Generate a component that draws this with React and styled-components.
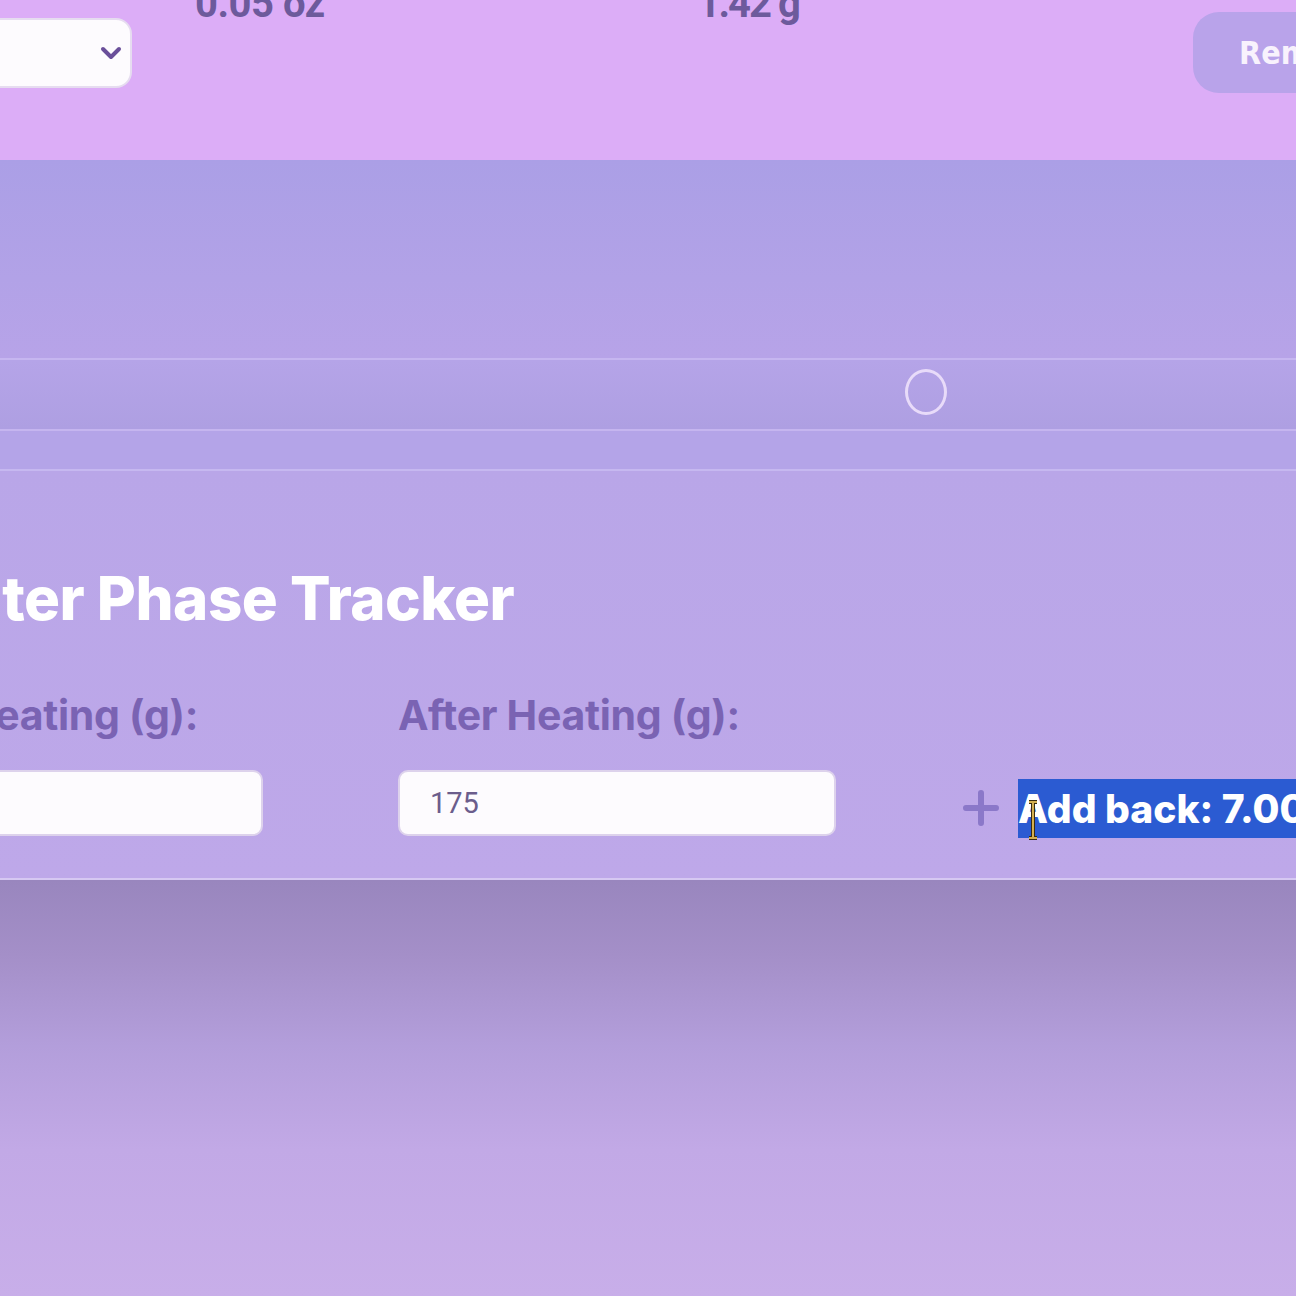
import React from 'react';
import styled, { createGlobalStyle } from 'styled-components';

const GlobalStyle = createGlobalStyle`
  html, body {
    margin: 0;
    padding: 0;
    background: #c6abe8;
    overflow: hidden;
  }
`;

const Page = styled.div`
  width: 1296px;
  height: 1296px;
  overflow: hidden;
  display: flex;
  flex-direction: column;
  font-family: Inter, 'Open Sans', sans-serif;
`;

const IngredientRow = styled.div`
  height: 160px;
  flex-shrink: 0;
  background: #dcadf7;
  display: flex;
  align-items: flex-start;
  box-sizing: border-box;
`;

const UnitSelect = styled.div`
  margin-top: 18px;
  margin-left: -40px;
  width: 172px;
  height: 70px;
  box-sizing: border-box;
  background: #fdfbfe;
  border: 2px solid #e6dcf0;
  border-radius: 16px;
  display: flex;
  align-items: center;
  justify-content: flex-end;
  padding-right: 8px;
  color: #6a4f9a;
`;

const Amount = styled.div`
  font-family: Roboto, 'Liberation Sans', sans-serif;
  font-weight: 700;
  font-size: 40px;
  line-height: 40px;
  margin-top: -16px;
  margin-left: ${(p) => p.$gap}px;
  color: #6d5a9c;
  letter-spacing: ${(p) => p.$tight}px;
  white-space: nowrap;
`;

const RemoveButton = styled.button`
  margin-top: 12px;
  margin-left: auto;
  margin-right: -60px;
  width: 163px;
  height: 81px;
  border: none;
  border-radius: 26px;
  background: #b9a3ea;
  color: #f8f2fd;
  font-family: 'DejaVu Sans Condensed', 'Liberation Sans Narrow', sans-serif;
  font-weight: 700;
  font-size: 32px;
  text-align: left;
  padding-left: 46px;
  white-space: nowrap;
`;

const Backdrop = styled.div`
  height: 198px;
  flex-shrink: 0;
  background: linear-gradient(180deg, #ab9fe6 0%, #b2a2e7 60%, #b7a3e8 100%);
`;

const SliderBand = styled.div`
  height: 73px;
  flex-shrink: 0;
  box-sizing: border-box;
  border-top: 2px solid #c6b6f0;
  border-bottom: 2px solid #c5b5ef;
  background: linear-gradient(180deg, #b5a4e8 0%, #ae9fe2 100%);
  display: flex;
  align-items: center;
  padding-left: 905px;
`;

const Knob = styled.span`
  width: 42px;
  height: 46px;
  box-sizing: border-box;
  border: 3px solid #e8dbf9;
  border-radius: 50%;
  margin-top: -6px;
`;

const Spacer = styled.div`
  height: 40px;
  flex-shrink: 0;
  box-sizing: border-box;
  border-bottom: 2px solid #c6b8f0;
  background: #b4a4e8;
`;

const TrackerCard = styled.section`
  height: 409px;
  flex-shrink: 0;
  box-sizing: border-box;
  background: linear-gradient(180deg, #b9a6e8 0%, #bea8e9 100%);
  border-bottom: 2px solid #d6c8f2;
  padding-top: 92px;
  margin-left: -175px;
`;

const Title = styled.h2`
  margin: 0;
  padding-left: 83px;
  font-family: Inter, 'Open Sans', sans-serif;
  font-weight: 800;
  font-size: 60px;
  line-height: 70px;
  color: #ffffff;
  letter-spacing: -0.5px;
  white-space: nowrap;
`;

const FieldRow = styled.div`
  display: flex;
  align-items: flex-start;
  margin-top: 57px;
`;

const Field = styled.label`
  display: flex;
  flex-direction: column;
  gap: 30px;
  width: 438px;
  flex-shrink: 0;
  margin-right: ${(p) => p.$after}px;
`;

const FieldLabel = styled.span`
  font-family: Inter, 'Open Sans', sans-serif;
  font-weight: 700;
  font-size: 41px;
  line-height: 50px;
  color: #7a63b3;
  letter-spacing: -0.3px;
  white-space: nowrap;
`;

const NumberInput = styled.div`
  height: 66px;
  box-sizing: border-box;
  background: #fdfbfe;
  border: 2px solid #ddd2ec;
  border-radius: 10px;
  padding-left: 30px;
  display: flex;
  align-items: center;
  font-family: Roboto, 'Liberation Sans', sans-serif;
  font-size: 29px;
  color: #6b5d8c;
`;

const Result = styled.div`
  display: flex;
  align-items: center;
  gap: 18px;
  flex-shrink: 0;
  margin-top: 80px;
  height: 66px;
  padding-top: 5px;
  position: relative;
`;

const Selected = styled.span`
  background: #2b5bd2;
  color: #ffffff;
  font-family: Inter, 'Open Sans', sans-serif;
  font-weight: 800;
  font-size: 39px;
  line-height: 59px;
  white-space: nowrap;
`;

const Caret = styled.svg`
  position: absolute;
  left: 65px;
  top: 30px;
`;

const Shade = styled.div`
  flex: 1;
  background: linear-gradient(180deg, #9986be 0%, #a48fc8 18%, #b39edb 40%, #c2a9e6 65%, #c8aee9 100%);
`;

export default function App() {
  return (
    <Page>
      <GlobalStyle />
      <IngredientRow>
        <UnitSelect>
          <svg width="22" height="14" viewBox="0 0 22 14">
            <path d="M3 3 L11 11 L19 3" fill="none" stroke="#6a4f9a" strokeWidth="4" strokeLinecap="round" strokeLinejoin="round" />
          </svg>
        </UnitSelect>
        <Amount $gap={63} $tight={-0.5}>0.05 oz</Amount>
        <Amount $gap={373} $tight={-2}>1.42 g</Amount>
        <RemoveButton>Remove</RemoveButton>
      </IngredientRow>
      <Backdrop />
      <SliderBand>
        <Knob />
      </SliderBand>
      <Spacer />
      <TrackerCard>
        <Title>Water Phase Tracker</Title>
        <FieldRow>
          <Field $after={135}>
            <FieldLabel>Before Heating (g):</FieldLabel>
            <NumberInput>182</NumberInput>
          </Field>
          <Field $after={126}>
            <FieldLabel>After Heating (g):</FieldLabel>
            <NumberInput>175</NumberInput>
          </Field>
          <Result>
            <svg width="38" height="38" viewBox="0 0 38 38">
              <path d="M19 4 V34 M4 19 H34" stroke="#8b78c9" strokeWidth="6" strokeLinecap="round" />
            </svg>
            <Selected>Add back: 7.00 g</Selected>
            <Caret width="12" height="40" viewBox="0 0 12 40">
              <path d="M2 2 H10 M6 2 V38 M2 38 H10" stroke="#3a2c10" strokeWidth="4" fill="none" />
              <path d="M2 2 H10 M6 2 V38 M2 38 H10" stroke="#d4b050" strokeWidth="2" fill="none" />
            </Caret>
          </Result>
        </FieldRow>
      </TrackerCard>
      <Shade />
    </Page>
  );
}
